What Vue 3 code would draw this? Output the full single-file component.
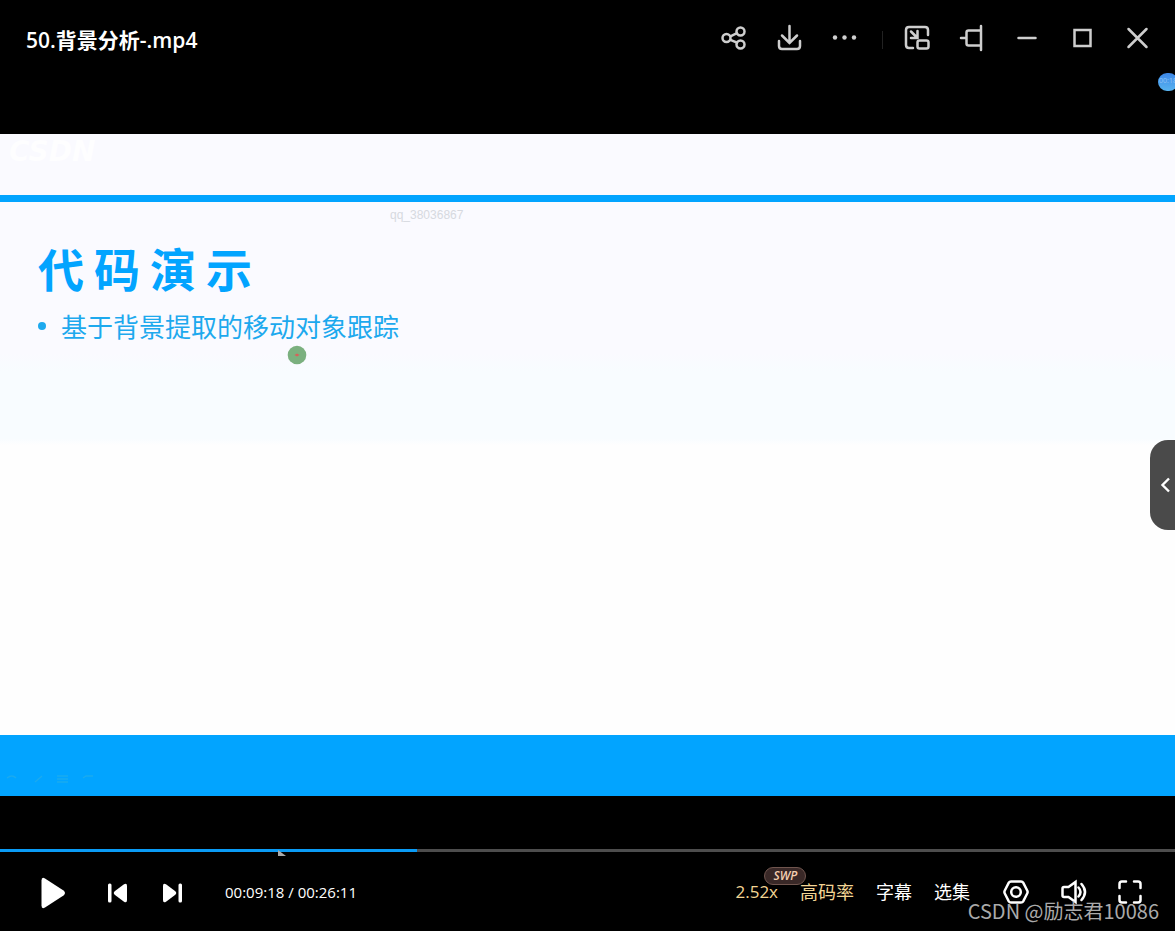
<script setup>
import { ref } from 'vue'

const title = '50.背景分析-.mp4'
const elapsed = ref(558)
const duration = 1571
const played = (elapsed.value / duration) * 100

const clock = (s) =>
  [Math.floor(s / 3600), Math.floor(s / 60) % 60, s % 60]
    .map((n) => String(n).padStart(2, '0'))
    .join(':')
</script>

<template>
  <main class="player">
    <header class="titlebar">
      <h1 class="title">{{ title }}</h1>
      <div class="tools">
        <button class="icon" aria-label="分享">
          <svg width="28" height="28" viewBox="0 0 28 28">
            <circle cx="6.500" cy="14" r="4" /><circle cx="20.500" cy="7.500" r="4" /><circle cx="20.500" cy="20.500" r="4" />
            <path d="M10.400 12.300 17 9.200M10.400 15.800 17 18.700" />
          </svg>
        </button>
        <button class="icon" aria-label="下载">
          <svg width="28" height="28" viewBox="0 0 28 28">
            <path d="M14.500 2v17M7 11.500l7.500 7.500 7.500-7.500M4 17v5q0 3 3 3h15q3 0 3-3v-5" />
          </svg>
        </button>
        <button class="icon" aria-label="更多">
          <svg width="28" height="28" viewBox="0 0 28 28">
            <g class="solid"><circle cx="5" cy="13.500" r="2.200" /><circle cx="14.500" cy="13.500" r="2.200" /><circle cx="24" cy="13.500" r="2.200" /></g>
          </svg>
        </button>
        <span class="divider"></span>
        <button class="icon" aria-label="小窗播放">
          <svg width="28" height="28" viewBox="0 0 28 28">
            <path d="M10 24H6q-3 0-3-3V6q0-3 3-3h16q3 0 3 3v5M8 7.500l6 6M14.500 7v7H8" />
            <rect x="14.500" y="16.500" width="11" height="8" rx="2" />
          </svg>
        </button>
        <button class="icon" aria-label="置顶">
          <svg width="28" height="28" viewBox="0 0 28 28">
            <path d="M23 2v24M23 6.500H10.500q-2 0-2 2v11q0 2 2 2H23M3 14h5.500" />
          </svg>
        </button>
        <button class="icon" aria-label="最小化">
          <svg width="28" height="28" viewBox="0 0 28 28"><path d="M5.500 14h17" /></svg>
        </button>
        <button class="icon" aria-label="最大化">
          <svg width="28" height="28" viewBox="0 0 28 28"><rect x="6.500" y="6" width="16" height="16" /></svg>
        </button>
        <button class="icon" aria-label="关闭">
          <svg width="28" height="28" viewBox="0 0 28 28"><path d="m5.500 5 18 18M23.500 5l-18 18" /></svg>
        </button>
      </div>
    </header>

    <section class="stage">
      <span class="bubble">00:18</span>
      <article class="slide">
        <div class="slide-head"><span class="brand">CSDN</span></div>
        <div class="slide-body">
          <span class="user">qq_38036867</span>
          <h2>代码演示</h2>
          <ul><li>基于背景提取的移动对象跟踪</li></ul>
          <svg class="pointer" width="20" height="20" viewBox="0 0 20 20">
            <circle cx="10" cy="10" r="9.300" fill="#7bb07f" />
            <path d="M7.500 10 10 8.500 12.500 10 10 11.500z" fill="#d9605a" />
          </svg>
        </div>
        <div class="slide-foot">
          <svg width="90" height="12" viewBox="0 0 90 12">
            <path d="M2 5q5-4 9 0M30 9l7-6M52 3h11M52 6h11M52 9h11M78 5l3-2h7" />
          </svg>
        </div>
      </article>
      <button class="drawer" aria-label="展开列表">
        <svg width="12" height="20" viewBox="0 0 12 20"><path d="M9 3.500 2.500 10 9 16.500" /></svg>
      </button>
    </section>

    <div class="progress">
      <div class="played" :style="{ width: played + '%' }"></div>
      <svg class="marker" width="9" height="7" viewBox="0 0 9 7"><path d="M1 0v6h8z" fill="#aaa" /></svg>
    </div>

    <footer class="controls">
      <div class="transport">
        <button class="icon play" aria-label="播放">
          <svg width="28" height="34" viewBox="0 0 28 34">
            <path class="fill" d="M2.500 4.500q0-4 3.500-2l18.500 12q3 2.500 0 5L6 31.500q-3.500 2-3.500-2z" />
          </svg>
        </button>
        <button class="icon" aria-label="上一集">
          <svg width="22" height="22" viewBox="0 0 22 22">
            <rect class="fill" x="1" y="1.500" width="3.500" height="19" rx="1.500" />
            <path class="fill" d="M20 4q0-3.500-3-1.800L8 9q-2.500 2 0 4l9 6.800q3 1.700 3-1.800z" />
          </svg>
        </button>
        <button class="icon" aria-label="下一集">
          <svg width="22" height="22" viewBox="0 0 22 22">
            <rect class="fill" x="16.500" y="1.500" width="3.500" height="19" rx="1.500" />
            <path class="fill" d="M1 4q0-3.500 3-1.800L13 9q2.500 2 0 4l-9 6.800q-3 1.700-3-1.800z" />
          </svg>
        </button>
      </div>
      <span class="time">{{ clock(elapsed) }} / {{ clock(duration) }}</span>

      <div class="options">
        <button class="text gold speed">2.52x<span class="badge">SWP</span></button>
        <button class="text gold">高码率</button>
        <button class="text">字幕</button>
        <button class="text">选集</button>
      </div>
      <div class="actions">
        <button class="icon bright" aria-label="设置">
          <svg width="28" height="28" viewBox="0 0 28 28">
            <path d="M9 3.500h10q1.500 0 2.200 1.200l4 7.800q.8 1.500 0 3l-4 7.800Q20.500 24.500 19 24.500H9q-1.500 0-2.200-1.200l-4-7.800q-.8-1.500 0-3l4-7.800Q7.500 3.500 9 3.500z" />
            <circle cx="14" cy="14" r="4.800" />
          </svg>
        </button>
        <button class="icon bright" aria-label="音量">
          <svg width="28" height="28" viewBox="0 0 28 28">
            <path d="M16.500 4v20l-7-5H5q-1.500 0-1.500-1.500v-7Q3.500 9 5 9h4.500zM19.500 9.500q4 4.500 0 9M22.500 6q7 8 0 16" />
          </svg>
        </button>
        <button class="icon bright" aria-label="全屏">
          <svg width="28" height="28" viewBox="0 0 28 28">
            <path d="M3.500 10V6q0-2.500 2.500-2.500h4M18 3.500h4q2.500 0 2.500 2.500v4M24.500 18v4q0 2.500-2.500 2.500h-4M10 24.500H6Q3.500 24.500 3.500 22v-4" />
          </svg>
        </button>
      </div>
    </footer>
    <span class="watermark">CSDN @励志君10086</span>
  </main>
</template>

<style>
body { background: #000; }
</style>

<style scoped>
.player {
  position: relative;
  display: flex;
  flex-direction: column;
  min-height: 100vh;
  overflow: hidden;
  background: #000;
  color: #fff;
  font-family: "Open Sans", "Noto Sans CJK SC", sans-serif;
}
h1, h2, ul { margin: 0; padding: 0; }
button {
  margin: 0;
  padding: 0;
  border: 0;
  background: none;
  color: inherit;
  font: inherit;
  cursor: pointer;
}
svg { display: block; }
.titlebar {
  display: flex;
  align-items: center;
  justify-content: space-between;
  height: 76px;
  padding: 0 11px 0 26px;
}
.title { font-size: 21px; line-height: 28px; font-weight: 600; padding-top: 4px; }
.tools, .actions, .transport { display: flex; align-items: center; }
.icon {
  display: flex;
  justify-content: center;
  align-items: center;
  width: 55px;
  height: 40px;
  fill: none;
  stroke: #cecece;
  stroke-width: 2.5;
  stroke-linecap: round;
}
.solid { fill: #d0d0d0; stroke: none; }
.fill { fill: #fff; stroke: none; }
.divider { width: 1px; height: 18px; margin: 4px 6px 0 11px; background: #222; }

.stage {
  position: relative;
  flex: 1;
  display: flex;
  align-items: center;
}
.bubble {
  position: absolute;
  top: -3px;
  right: -3px;
  width: 20px;
  height: 18px;
  border-radius: 9px;
  background: linear-gradient(#3c86e6, #58b4f0);
  color: #8fc4f8;
  font-size: 7px;
  line-height: 16px;
  text-align: center;
}
.slide {
  display: flex;
  flex-direction: column;
  width: 100%;
  aspect-ratio: 71 / 40;
  margin-top: 5px;
  background: linear-gradient(#fafaff 0 33%, #f8fcff 36% 46%, #fefefe 47%);
}
.slide-head {
  height: 61px;
  border-bottom: 7px solid #02a4ff;
}
.brand {
  display: block;
  padding: 4px 9px;
  color: #fefeff;
  font-family: "DejaVu Sans", sans-serif;
  font-size: 28px;
  line-height: 28px;
  font-weight: 700;
  font-style: italic;
}
.slide-body { position: relative; flex: 1; padding: 33px 38px; color: #02a4ff; }
.user {
  position: absolute;
  top: 4px;
  left: 390px;
  color: #d6d9e0;
  font: 12px/18px "Liberation Sans", sans-serif;
}
h2 {
  font-family: "Noto Sans CJK SC", sans-serif;
  font-size: 46px;
  line-height: 64px;
  font-weight: 700;
  letter-spacing: 10px;
}
ul {
  margin-top: 8px;
  list-style: none;
  font-family: "Noto Sans CJK SC", sans-serif;
  font-size: 26px;
  line-height: 38px;
  color: #1da9ee;
}
li { display: flex; align-items: center; gap: 15px; }
li::before {
  content: "";
  width: 8px;
  height: 8px;
  border-radius: 4px;
  background: #1da9ee;
}
.pointer { position: absolute; left: 287px; top: 143px; }
.slide-foot {
  display: flex;
  align-items: flex-end;
  height: 61px;
  padding: 0 5px 11px;
  box-sizing: border-box;
  background: #02a4ff;
  fill: none;
  stroke: #1aaaf0;
  stroke-width: 1.5;
}
.drawer {
  position: absolute;
  right: 0;
  top: 364px;
  display: flex;
  align-items: center;
  justify-content: flex-end;
  width: 25px;
  height: 90px;
  padding-right: 3px;
  border-radius: 18px 0 0 18px;
  background: #4a4a4a;
  fill: none;
  stroke: #fff;
  stroke-width: 2.4;
}

.progress { position: relative; height: 3px; background: #4d4d4d; }
.played { height: 3px; background: #0a9bf5; }
.marker { position: absolute; left: 277px; top: 1px; }

.controls {
  display: flex;
  align-items: center;
  height: 79px;
  padding: 0 18px 0 25px;
}
.transport { padding-top: 3px; }
.play { margin-right: 10px; }
.time { margin-left: 25px; font-size: 15px; line-height: 20px; white-space: nowrap; }
.options {
  display: flex;
  align-items: center;
  gap: 22px;
  margin-left: auto;
  font-size: 18px;
  line-height: 24px;
}
.text { white-space: nowrap; }
.gold { color: #f3d594; }
.speed { position: relative; font-size: 17px; }
.badge {
  position: absolute;
  left: 29px;
  top: -13px;
  width: 40px;
  border: 1px solid #70554e;
  border-radius: 10px;
  background: #392827;
  color: #f4cfb0;
  font-size: 12px;
  line-height: 16px;
  font-weight: 600;
  font-style: italic;
}
.actions { gap: 2px; margin-left: 18px; }
.bright { stroke: #fff; }
.watermark {
  position: absolute;
  right: 16px;
  bottom: 6px;
  color: #aaa;
  font: 20px/28px "Noto Sans CJK SC", sans-serif;
  pointer-events: none;
}
</style>
